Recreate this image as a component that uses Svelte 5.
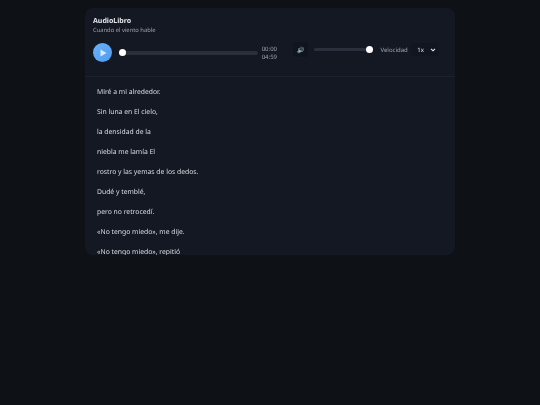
<script lang="ts">
	let current = $state('00:00');
	let total = '04:59';
	let speed = $state('1x');
	const lines = [
		'Miré a mi alrededor.',
		'Sin luna en El cielo,',
		'la densidad de la',
		'niebla me lamía El',
		'rostro y las yemas de los dedos.',
		'Dudé y temblé,',
		'pero no retrocedí.',
		'«No tengo miedo», me dije.',
		'«No tengo miedo», repitió'
	];
</script>

<main class="page">
	<div class="card">
		<header class="player">
			<div class="title">AudioLibro</div>
			<div class="subtitle">Cuando el viento hable</div>
			<div class="controls">
				<div class="progress">
					<button class="play" aria-label="Reproducir">
						<svg width="7" height="8" viewBox="0 0 7 8"><path d="M0.5 0.5L6.5 4L0.5 7.5Z" fill="#dbeafe" /></svg>
					</button>
					<div class="track"><span class="knob"></span></div>
					<div class="times">
						<span>{current}</span>
						<span>{total}</span>
					</div>
				</div>
				<div class="settings">
					<button class="mute">🔊</button>
					<div class="volume"><span class="knob end"></span></div>
					<span class="speed-label">Velocidad</span>
					<div class="speed">
						<span>{speed}</span>
						<svg width="6" height="4" viewBox="0 0 6 4"><path d="M1 0.8l2 2 2-2" fill="none" stroke="#e5e7eb" stroke-width="1.1" /></svg>
					</div>
				</div>
			</div>
		</header>
		<div class="text">
			{#each lines as line}
				<p>{line}</p>
			{/each}
		</div>
	</div>
</main>

<style>
	:global(body) {
		margin: 0;
		background: #0e1115;
		font-family: 'Noto Sans', sans-serif;
		text-rendering: geometricPrecision;
	}

	.page {
		height: 405px;
		padding-top: 8px;
		box-sizing: border-box;
		overflow: hidden;
		filter: blur(0.3px);
	}

	.card {
		width: 370px;
		height: 247px;
		margin: 0 auto;
		background: #141822;
		border-radius: 8px;
		overflow: hidden;
	}

	.player {
		height: 69px;
		padding: 8.5px 8px 0;
		box-sizing: border-box;
		border-bottom: 1px solid #1d212c;
	}

	.title {
		font-size: 7px;
		line-height: 9px;
		font-weight: 700;
		color: #e5e7eb;
	}

	.subtitle {
		font-size: 5.8px;
		line-height: 8px;
		color: #9ca3af;
	}

	.controls {
		display: flex;
		align-items: flex-start;
		gap: 16px;
		margin-top: 8.5px;
	}

	.progress {
		display: flex;
		align-items: center;
		width: 184px;
		padding-top: 1px;
	}

	.settings {
		display: flex;
		align-items: center;
	}

	.play {
		display: flex;
		align-items: center;
		justify-content: center;
		width: 19px;
		height: 19px;
		border: 0;
		padding: 0 0 0 1px;
		border-radius: 50%;
		background: linear-gradient(135deg, #6ab0fb, #4f9cf0);
		flex: none;
	}

	.track {
		width: 139px;
		height: 4px;
		margin-left: 7px;
		background: #2a2f3d;
		border-radius: 2px;
		position: relative;
	}

	.volume {
		width: 59px;
		height: 3px;
		margin-left: 6px;
		background: #2a2f3d;
		border-radius: 2px;
		position: relative;
	}

	.knob {
		position: absolute;
		left: 0;
		top: -1.5px;
		width: 7px;
		height: 7px;
		border-radius: 50%;
		background: #fff;
	}

	.knob.end {
		left: auto;
		right: 0;
		top: -2px;
	}

	.times {
		display: flex;
		flex-direction: column;
		margin-left: 4px;
		padding-top: 1px;
		font-size: 6px;
		line-height: 8.2px;
		color: #9ca3af;
	}

	.mute {
		width: 15px;
		height: 15px;
		padding: 0;
		border: 0;
		border-radius: 4px;
		background: #10141d;
		color: #cbd5e1;
		font-size: 6px;
		flex: none;
	}

	.speed-label {
		margin-left: 7.5px;
		font-size: 6px;
		color: #9ca3af;
	}

	.speed {
		display: flex;
		align-items: center;
		justify-content: space-between;
		width: 28px;
		height: 13px;
		margin-left: 3.5px;
		padding: 0 3px 0 6px;
		box-sizing: border-box;
		background: #11151f;
		border-radius: 3px;
		font-size: 6px;
		color: #e5e7eb;
	}

	.text {
		padding: 8.5px 12px;
	}

	.text p {
		margin: 0 0 9px;
		font-size: 6.8px;
		line-height: 11px;
		color: #d9dce1;
	}
</style>
